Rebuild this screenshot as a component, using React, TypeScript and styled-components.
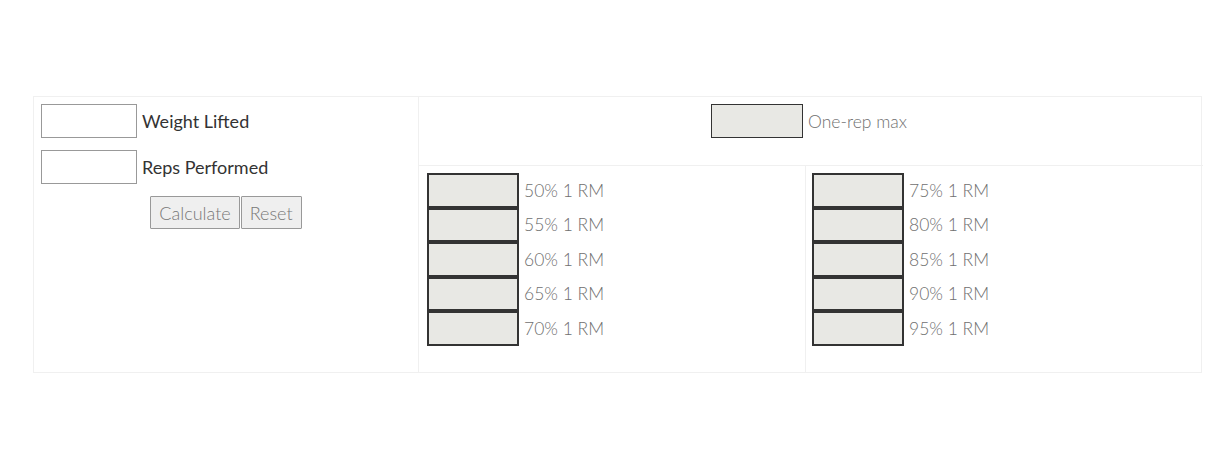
import React from 'react'
import styled, { createGlobalStyle } from 'styled-components'

const GlobalStyle = createGlobalStyle`
    body {
        margin: 0;
        background: #fff;
        font-family: Lato, "Liberation Sans", sans-serif;
    }
`

const Page = styled.div`
    padding: 96px 24px 0 33px;
`

const Table = styled.div`
    display: grid;
    grid-template-columns: 385px 784px;
    border: 1px solid #f0f0f0;
    box-sizing: border-box;
    width: 1169px;
    height: 277px;
`

const InputCell = styled.div`
    padding: 7px 7px;
    border-right: 1px solid #f0f0f0;
    display: flex;
    flex-direction: column;
    gap: 12px;
`

const Row = styled.div`
    display: flex;
    align-items: center;
    gap: 5px;
`

const Field = styled.input`
    width: 96px;
    height: 34px;
    box-sizing: border-box;
    border: 1px solid #999;
    border-radius: 0;
    padding: 0;
    margin: 0;
    background: #fff;
`

const Label = styled.label<{ $light?: boolean }>`
    font-size: ${p => (p.$light ? 17.5 : 18)}px;
    font-weight: ${p => (p.$light ? 300 : 400)};
    color: ${p => (p.$light ? '#6f6f6f' : '#333')};
    white-space: nowrap;
`

const Buttons = styled.div`
    display: flex;
    justify-content: center;
    gap: 1px;
`

const Button = styled.button`
    height: 33px;
    padding: 0 8px;
    border: 1px solid #999;
    border-radius: 1px;
    background: #efefef;
    color: #777;
    font-family: inherit;
    font-size: 18px;
    font-weight: 300;
`

const Results = styled.div`
    display: grid;
    grid-template-columns: 386px 398px;
    grid-template-rows: 69px 1fr;
`

const Header = styled.div`
    grid-column: 1 / 3;
    display: flex;
    justify-content: center;
    align-items: flex-start;
    padding-top: 7px;
    padding-right: 4px;
    border-bottom: 1px solid #f0f0f0;
`

const Column = styled.div<{ $divider?: boolean }>`
    padding: 7px 8px 0 ${p => (p.$divider ? 6 : 8)}px;
    border-left: ${p => (p.$divider ? '1px solid #f0f0f0' : 'none')};
`

const Output = styled.input`
    width: 92px;
    height: 34.5px;
    box-sizing: border-box;
    border: 2px solid #333;
    border-radius: 0;
    padding: 0;
    margin: 0;
    background: #e8e8e4;
`

const HeaderOutput = styled(Output)`
    height: 34px;
    border-width: 1.5px;
`

function App() {
    const left = [50, 55, 60, 65, 70]
    const right = [75, 80, 85, 90, 95]

    return (
        <Page>
            <GlobalStyle />
            <Table>
                <InputCell>
                    <Row>
                        <Field type="text" />
                        <Label>Weight Lifted</Label>
                    </Row>
                    <Row>
                        <Field type="text" />
                        <Label>Reps Performed</Label>
                    </Row>
                    <Buttons>
                        <Button>Calculate</Button>
                        <Button>Reset</Button>
                    </Buttons>
                </InputCell>
                <Results>
                    <Header>
                        <Row>
                            <HeaderOutput type="text" readOnly />
                            <Label $light>One-rep max</Label>
                        </Row>
                    </Header>
                    <Column>
                        {left.map(p => (
                            <Row key={p}>
                                <Output type="text" readOnly />
                                <Label $light>{p}% 1 RM</Label>
                            </Row>
                        ))}
                    </Column>
                    <Column $divider>
                        {right.map(p => (
                            <Row key={p}>
                                <Output type="text" readOnly />
                                <Label $light>{p}% 1 RM</Label>
                            </Row>
                        ))}
                    </Column>
                </Results>
            </Table>
        </Page>
    )
}

export default App
